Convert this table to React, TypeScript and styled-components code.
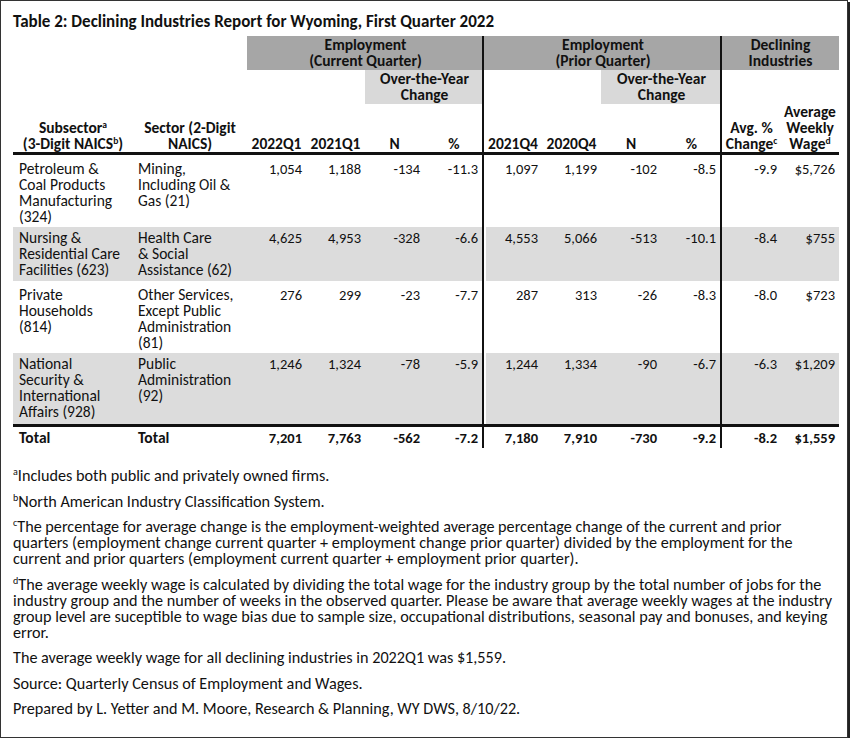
import React from 'react';
import styled, { createGlobalStyle } from 'styled-components';

const GlobalStyle = createGlobalStyle`
  html, body {
    margin: 0;
    padding: 0;
    background: #fff;
  }
  body {
    font-family: Carlito, Lato, "Liberation Sans", sans-serif;
    color: #111;
  }
`;

type Edge = 'line' | 'after' | undefined;

const edgeShadow = (e?: Edge) => {
  if (e === 'line') return 'box-shadow: inset -2px 0 0 #111;';
  if (e === 'after') return 'box-shadow: inset 2px 0 0 #fff;';
  return '';
};

const Frame = styled.div`
  box-sizing: border-box;
  width: 848px;
  height: 738px;
  border: 1px solid #333;
  box-shadow: 2px 2px 0 #222;
  padding: 10px 10px 0 12px;
`;

const Title = styled.h1`
  margin: 0 0 4px;
  font-size: 17px;
  line-height: 21px;
  font-weight: 700;
  white-space: nowrap;
`;

const Table = styled.table`
  border-collapse: separate;
  border-spacing: 0;
  table-layout: fixed;
  width: 826px;
  font-size: 15.5px;
  line-height: 16px;
`;

const BandCell = styled.th<{ $tone?: 'dark' | 'light'; $edge?: Edge }>`
  height: 34px;
  padding: 1px 0;
  box-sizing: border-box;
  font-weight: 700;
  text-align: center;
  vertical-align: middle;
  white-space: nowrap;
  background: ${p => (p.$tone === 'dark' ? '#a6a6a6' : p.$tone === 'light' ? '#d9d9d9' : 'transparent')};
  ${p => edgeShadow(p.$edge)}
`;

const LabelCell = styled.th<{ $edge?: Edge }>`
  padding: 0;
  font-weight: 700;
  text-align: center;
  vertical-align: bottom;
  white-space: nowrap;
  border-bottom: 3px solid #111;
  ${p => edgeShadow(p.$edge)}
`;

const Row = styled.tr<{ $h: number; $shade?: boolean }>`
  height: ${p => p.$h}px;
  background: ${p => (p.$shade ? '#dcdcdc' : '#fff')};

  td {
    padding-top: ${p => (p.$shade ? 3 : 6)}px;
  }
`;

const TotalRow = styled.tr`
  height: 24px;

  td {
    font-weight: 700;
    vertical-align: middle;
    border-top: 3px solid #111;
    padding-top: 0;
  }
`;

const Cell = styled.td<{ $num?: boolean; $edge?: Edge; $indent?: number }>`
  vertical-align: top;
  white-space: nowrap;
  padding-bottom: 0;
  font-size: ${p => (p.$num ? '14.5px' : 'inherit')};
  padding-left: ${p => (p.$num ? 0 : p.$indent ?? 6)}px;
  padding-right: ${p => (p.$num ? (p.$edge === 'line' ? 6 : 4) : 0)}px;
  text-align: ${p => (p.$num ? 'right' : 'left')};
  ${p => edgeShadow(p.$edge)}
`;

const Sup = styled.span`
  font-size: 0.62em;
  position: relative;
  top: -0.55em;
  line-height: 0;
`;

const Notes = styled.div`
  margin-top: 20px;
  font-size: 16.2px;
  line-height: 16px;
`;

const Note = styled.p`
  margin: 0 0 9.5px;
  white-space: nowrap;
`;

const widths = [120, 114, 59, 59, 59, 60, 58, 59, 60, 61, 59, 58];
const edges: Edge[] = [undefined, undefined, undefined, undefined, undefined, 'line', 'after', undefined, undefined, 'line', undefined, undefined];

const rows = [
  {
    sub: ['Petroleum &', 'Coal Products', 'Manufacturing', '(324)'],
    sec: ['Mining,', 'Including Oil &', 'Gas (21)'],
    vals: ['1,054', '1,188', '-134', '-11.3', '1,097', '1,199', '-102', '-8.5', '-9.9', '$5,726'],
    h: 72,
  },
  {
    sub: ['Nursing &', 'Residential Care', 'Facilities (623)'],
    sec: ['Health Care', '& Social', 'Assistance (62)'],
    vals: ['4,625', '4,953', '-328', '-6.6', '4,553', '5,066', '-513', '-10.1', '-8.4', '$755'],
    h: 54,
    shade: true,
  },
  {
    sub: ['Private', 'Households', '(814)'],
    sec: ['Other Services,', 'Except Public', 'Administration', '(81)'],
    vals: ['276', '299', '-23', '-7.7', '287', '313', '-26', '-8.3', '-8.0', '$723'],
    h: 72,
  },
  {
    sub: ['National', 'Security &', 'International', 'Affairs (928)'],
    sec: ['Public', 'Administration', '(92)'],
    vals: ['1,246', '1,324', '-78', '-5.9', '1,244', '1,334', '-90', '-6.7', '-6.3', '$1,209'],
    h: 71,
    shade: true,
  },
];

const totals = ['7,201', '7,763', '-562', '-7.2', '7,180', '7,910', '-730', '-9.2', '-8.2', '$1,559'];

const lines = (list: React.ReactNode[]) =>
  list.map((l, i) => (
    <React.Fragment key={i}>
      {i > 0 && <br />}
      {l}
    </React.Fragment>
  ));

const App = () => {
  return (
    <>
      <GlobalStyle />
      <Frame>
        <Title>Table 2: Declining Industries Report for Wyoming, First Quarter 2022</Title>
        <Table>
          <colgroup>
            {widths.map((w, i) => (
              <col key={i} style={{ width: w }} />
            ))}
          </colgroup>
          <thead>
            <tr>
              <BandCell colSpan={2} />
              <BandCell colSpan={4} $tone="dark" $edge="line">
                Employment<br />(Current Quarter)
              </BandCell>
              <BandCell colSpan={4} $tone="dark" $edge="line">
                Employment<br />(Prior Quarter)
              </BandCell>
              <BandCell colSpan={2} $tone="dark">
                Declining<br />Industries
              </BandCell>
            </tr>
            <tr>
              <BandCell colSpan={2} />
              <BandCell colSpan={2} />
              <BandCell colSpan={2} $tone="light" $edge="line">
                Over-the-Year<br />Change
              </BandCell>
              <BandCell colSpan={2} />
              <BandCell colSpan={2} $tone="light" $edge="line">
                Over-the-Year<br />Change
              </BandCell>
              <BandCell colSpan={2} />
            </tr>
            <tr>
              <LabelCell>
                Subsector<Sup>a</Sup>
                <br />
                (3-Digit NAICS<Sup>b</Sup>)
              </LabelCell>
              <LabelCell>
                Sector (2-Digit<br />NAICS)
              </LabelCell>
              <LabelCell>2022Q1</LabelCell>
              <LabelCell>2021Q1</LabelCell>
              <LabelCell>N</LabelCell>
              <LabelCell $edge="line">%</LabelCell>
              <LabelCell>2021Q4</LabelCell>
              <LabelCell>2020Q4</LabelCell>
              <LabelCell>N</LabelCell>
              <LabelCell $edge="line">%</LabelCell>
              <LabelCell>
                Avg. %<br />
                Change<Sup>c</Sup>
              </LabelCell>
              <LabelCell>
                Average<br />Weekly<br />
                Wage<Sup>d</Sup>
              </LabelCell>
            </tr>
          </thead>
          <tbody>
            {rows.map((r, ri) => (
              <Row key={ri} $h={r.h} $shade={r.shade}>
                <Cell>{lines(r.sub)}</Cell>
                <Cell $indent={5}>{lines(r.sec)}</Cell>
                {r.vals.map((v, vi) => (
                  <Cell key={vi} $num $edge={edges[vi + 2]}>
                    {v}
                  </Cell>
                ))}
              </Row>
            ))}
            <TotalRow>
              <Cell>Total</Cell>
              <Cell $indent={5}>Total</Cell>
              {totals.map((v, vi) => (
                <Cell key={vi} $num $edge={edges[vi + 2]}>
                  {v}
                </Cell>
              ))}
            </TotalRow>
          </tbody>
        </Table>
        <Notes>
          <Note>
            <Sup>a</Sup>Includes both public and privately owned firms.
          </Note>
          <Note>
            <Sup>b</Sup>North American Industry Classification System.
          </Note>
          <Note>
            <Sup>c</Sup>The percentage for average change is the employment-weighted average percentage change of the current and prior
            <br />
            quarters (employment change current quarter + employment change prior quarter) divided by the employment for the
            <br />
            current and prior quarters (employment current quarter + employment prior quarter).
          </Note>
          <Note>
            <Sup>d</Sup>The average weekly wage is calculated by dividing the total wage for the industry group by the total number of jobs for the
            <br />
            industry group and the number of weeks in the observed quarter. Please be aware that average weekly wages at the industry
            <br />
            group level are suceptible to wage bias due to sample size, occupational distributions, seasonal pay and bonuses, and keying
            <br />
            error.
          </Note>
          <Note>The average weekly wage for all declining industries in 2022Q1 was $1,559.</Note>
          <Note>Source: Quarterly Census of Employment and Wages.</Note>
          <Note>Prepared by L. Yetter and M. Moore, Research &amp; Planning, WY DWS, 8/10/22.</Note>
        </Notes>
      </Frame>
    </>
  );
};

export default App;
